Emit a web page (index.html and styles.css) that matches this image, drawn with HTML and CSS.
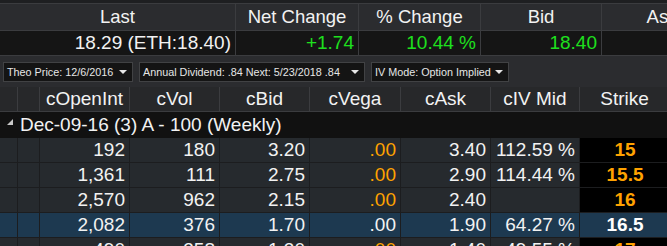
FILE: index.html
```html
<!DOCTYPE html>
<html lang="en">
<head>
  <meta charset="UTF-8">
  <title>Option Chain</title>
  <link rel="stylesheet" href="styles.css">
</head>
<body>

<div class="quote">
  <div class="qrow qhead">
    <div>Last</div>
    <div>Net Change</div>
    <div>% Change</div>
    <div>Bid</div>
    <div>Ask</div>
  </div>
  <div class="qrow qvals">
    <div>18.29 (ETH:18.40)</div>
    <div class="up">+1.74</div>
    <div class="up">10.44 %</div>
    <div class="up">18.40</div>
    <div></div>
  </div>
</div>

<div class="toolbar">
  <div class="pick pick-theo">Theo Price: 12/6/2016 <span class="arrow"></span></div>
  <div class="pick pick-div">Annual Dividend: .84 Next: 5/23/2018 .84 <span class="arrow"></span></div>
  <div class="pick pick-iv">IV Mode: Option Implied <span class="arrow"></span></div>
</div>

<div class="chain">
  <div class="crow chead">
    <div></div><div></div>
    <div>cOpenInt</div>
    <div>cVol</div>
    <div>cBid</div>
    <div>cVega</div>
    <div>cAsk</div>
    <div>cIV Mid</div>
    <div>Strike</div>
  </div>

  <div class="group"><span class="twisty"></span>Dec-09-16 (3) A - 100 (Weekly)</div>

  <div class="crow">
    <div></div><div></div>
    <div>192</div><div>180</div><div>3.20</div>
    <div class="vega">.00</div>
    <div>3.40</div><div>112.59 %</div>
    <div class="strike">15</div>
  </div>
  <div class="crow">
    <div></div><div></div>
    <div>1,361</div><div>111</div><div>2.75</div>
    <div class="vega">.00</div>
    <div>2.90</div><div>114.44 %</div>
    <div class="strike">15.5</div>
  </div>
  <div class="crow">
    <div></div><div></div>
    <div>2,570</div><div>962</div><div>2.15</div>
    <div class="vega">.00</div>
    <div>2.40</div><div></div>
    <div class="strike">16</div>
  </div>
  <div class="crow selected">
    <div></div><div></div>
    <div>2,082</div><div>376</div><div>1.70</div>
    <div class="vega">.00</div>
    <div>1.90</div><div>64.27 %</div>
    <div class="strike">16.5</div>
  </div>
  <div class="crow">
    <div></div><div></div>
    <div>490</div><div>358</div><div>1.30</div>
    <div class="vega">.00</div>
    <div>1.40</div><div>49.55 %</div>
    <div class="strike">17</div>
  </div>
</div>

</body>
</html>
```

FILE: styles.css
```css
:root {
  --text-color: #f2f2f2;
  --green: #1ee01e;
  --orange: #ffa200;
  --line: #3b3c3f;
  --grid-line: #1c1d1f;
}

body {
  margin: 0;
  width: 667px;
  height: 246px;
  overflow: hidden;
  background-color: #262a2e;
  color: var(--text-color);
  font-family: "Liberation Sans", Arial, sans-serif;
}

/* quote strip on top */
.quote {
  padding-top: 3px;
  background-color: #1e1f21;
}

.qrow {
  display: grid;
  grid-template-columns: 236px 123px 122px 121px 121px;
  width: 723px;
}

.qrow div {
  border-right: 1px solid var(--line);
  white-space: nowrap;
}

.qhead {
  height: 26px;
  border-top: 1px solid var(--line);
  border-bottom: 1px solid var(--line);
  background-color: #2b2c2f;
  font-size: 18.5px;
  line-height: 26px;
  text-align: center;
}

.qvals {
  height: 24px;
  border-bottom: 1px solid var(--line);
  background-color: #151515;
  font-size: 19px;
  line-height: 24px;
  text-align: right;
}

.qvals div {
  padding-right: 4px;
}

.up {
  color: var(--green);
}

/* dropdown strip */
.toolbar {
  display: flex;
  gap: 6px;
  height: 31px;
  padding: 6px 0 0 3px;
  box-sizing: border-box;
  background-color: #2b2c2f;
  font-size: 10.8px;
  color: #e6e6e6;
}

.pick {
  position: relative;
  height: 20px;
  line-height: 18px;
  box-sizing: border-box;
  padding: 0 18px 0 3px;
  border: 1px solid #414244;
  background-color: #141414;
  white-space: nowrap;
  overflow: hidden;
}

.pick-theo { width: 130px; }
.pick-div { width: 226px; }
.pick-iv { width: 138px; }

.arrow {
  position: absolute;
  right: 5px;
  top: 7px;
  border-left: 4px solid transparent;
  border-right: 4px solid transparent;
  border-top: 4px solid #e6e6e6;
}

/* option chain grid */
.crow {
  display: grid;
  grid-template-columns: 18px 22px 90px 90px 90px 91px 90px 89px 90px;
  height: 25px;
  box-sizing: border-box;
  border-bottom: 1px solid var(--grid-line);
  font-size: 19px;
  line-height: 24px;
}

.crow div {
  border-right: 1px solid var(--grid-line);
  padding-right: 4px;
  text-align: right;
  white-space: nowrap;
}

.chead {
  height: 25px;
  background-color: #27282a;
  border-bottom: 1px solid var(--line);
}

.chead div {
  border-right: 1px solid var(--line);
  padding-right: 0;
  text-align: center;
}

.group {
  height: 26px;
  line-height: 25px;
  background-color: #111111;
  font-size: 19px;
  white-space: nowrap;
}

.twisty {
  display: inline-block;
  width: 0;
  height: 0;
  margin: 0 7px 0 7px;
  vertical-align: 6px;
  border-left: 6px solid transparent;
  border-bottom: 6px solid #c8c8c8;
}

.vega {
  color: var(--orange);
}

.strike {
  background-color: #000;
  color: var(--orange);
  font-weight: bold;
}

.crow .strike {
  text-align: center;
  padding-right: 0;
  border-right: none;
}

.selected {
  background-color: #1d3950;
}

.selected .vega {
  color: var(--text-color);
}

.selected .strike {
  background-color: #1d3950;
  color: #ffffff;
}
```
